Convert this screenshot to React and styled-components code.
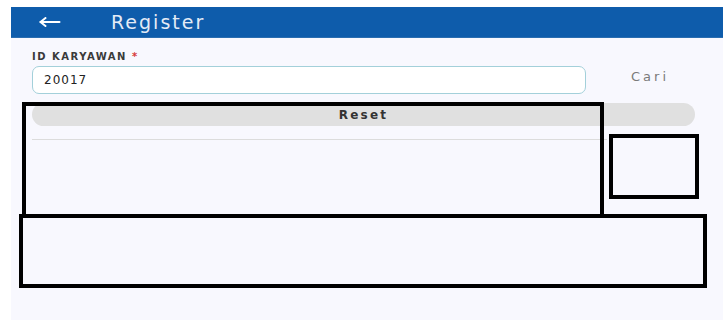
import React from "react";
import styled, { createGlobalStyle } from "styled-components";

const Global = createGlobalStyle`
  html, body { margin: 0; padding: 0; background: #ffffff; }
  body { font-family: "DejaVu Sans", "Liberation Sans", sans-serif; }
`;

const Page = styled.div`
  position: relative;
  width: 723px;
  height: 320px;
  padding: 7px 0 0 11px;
  box-sizing: border-box;
  background: #ffffff;
  overflow: hidden;
`;

const Screen = styled.div`
  height: 313px;
  background: #f8f8fe;
  display: flex;
  flex-direction: column;
`;

const Header = styled.header`
  height: 30px;
  background: #0e5cab;
  border-bottom: 1px solid #2a6db0;
  display: flex;
  align-items: center;
  padding-left: 28px;
  gap: 50px;
`;

const Title = styled.h1`
  margin: 0;
  font-family: "DejaVu Sans", sans-serif;
  font-weight: 400;
  font-size: 19px;
  letter-spacing: 2px;
  color: #e3ebf6;
`;

const Form = styled.div`
  padding: 13px 28px 0 21px;
  display: flex;
  flex-direction: column;
`;

const Label = styled.label`
  font-size: 10px;
  font-weight: 700;
  letter-spacing: 1.5px;
  color: #3a3a3a;
  line-height: 11px;
  margin-bottom: 4px;
`;

const Star = styled.span`
  color: #d63a3a;
`;

const Row = styled.div`
  display: flex;
  align-items: center;
`;

const Input = styled.input`
  width: 554px;
  height: 28px;
  box-sizing: border-box;
  border: 1px solid #a3d0da;
  border-radius: 7px;
  background: #ffffff;
  padding: 0 11px;
  font-family: "DejaVu Sans", sans-serif;
  font-size: 12px;
  letter-spacing: 1px;
  color: #222;
  outline: none;
`;

const SearchLink = styled.button`
  margin-left: 45px;
  margin-top: -8px;
  background: none;
  border: 0;
  padding: 0;
  font-family: "DejaVu Sans", sans-serif;
  font-size: 13px;
  letter-spacing: 3px;
  color: #7a7a7a;
`;

const ResetButton = styled.button`
  margin-top: 9px;
  height: 23px;
  width: 100%;
  border: 0;
  border-radius: 12px;
  background: #e0e0e0;
  font-family: "DejaVu Sans", sans-serif;
  font-weight: 700;
  font-size: 12px;
  letter-spacing: 2.2px;
  color: #333;
`;

const Divider = styled.hr`
  margin: 13px 0 0 0;
  width: 575px;
  border: 0;
  border-top: 1px solid #dcdcdc;
`;

const Mark = styled.div`
  position: absolute;
  box-sizing: border-box;
  border: 4px solid #000;
  pointer-events: none;
`;

const BackIcon = () => (
  <svg width="22" height="10" viewBox="0 0 22 10" fill="none" stroke="#ffffff" strokeWidth="2" strokeLinecap="round" strokeLinejoin="round">
    <path d="M1.5 5H20.5" />
    <path d="M6.5 1L1.5 5L6.5 9" />
  </svg>
);

const marks = [
  { left: 22, top: 102, width: 582, height: 116 },
  { left: 609, top: 134, width: 90, height: 65 },
  { left: 19, top: 214, width: 688, height: 74 },
];

export default function App() {
  return (
    <Page>
      <Global />
      <Screen>
        <Header>
          <BackIcon />
          <Title>Register</Title>
        </Header>
        <Form>
          <Label>
            ID KARYAWAN <Star>*</Star>
          </Label>
          <Row>
            <Input defaultValue="20017" />
            <SearchLink>Cari</SearchLink>
          </Row>
          <ResetButton>Reset</ResetButton>
          <Divider />
        </Form>
      </Screen>
      {marks.map((m, i) => (
        <Mark key={i} style={{ left: m.left, top: m.top, width: m.width, height: m.height }} />
      ))}
    </Page>
  );
}
